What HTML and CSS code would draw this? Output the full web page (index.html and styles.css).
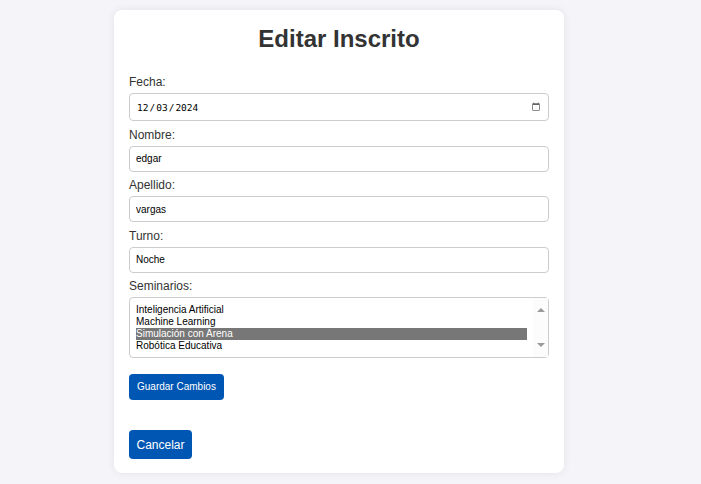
FILE: index.html
```html
<!DOCTYPE html>
<html lang="es">
<head>
<meta charset="utf-8">
<title>Editar Inscrito</title>
<link rel="stylesheet" href="styles.css">
</head>
<body>
<div class="card">
  <h2 class="title">Editar Inscrito</h2>
  <form class="form">
    <label class="label" for="fecha">Fecha:</label>
    <input class="field field-date" type="date" id="fecha" value="2024-12-03">
    <label class="label" for="nombre">Nombre:</label>
    <input class="field" type="text" id="nombre" value="edgar">
    <label class="label" for="apellido">Apellido:</label>
    <input class="field" type="text" id="apellido" value="vargas">
    <label class="label" for="turno">Turno:</label>
    <input class="field" type="text" id="turno" value="Noche">
    <label class="label">Seminarios:</label>
    <div class="listbox" role="listbox" aria-multiselectable="true">
      <div class="options">
        <div class="option" role="option">Inteligencia Artificial</div>
        <div class="option" role="option">Machine Learning</div>
        <div class="option selected" role="option" aria-selected="true">Simulación con Arena</div>
        <div class="option" role="option">Robótica Educativa</div>
      </div>
      <div class="scrollbar">
        <span class="arrow arrow-up"></span>
        <span class="arrow arrow-down"></span>
      </div>
    </div>
    <div class="actions">
      <button class="btn btn-save" type="button">Guardar Cambios</button>
    </div>
  </form>
  <div class="actions">
    <a class="btn btn-cancel" href="#">Cancelar</a>
  </div>
</div>
</body>
</html>
```
FILE: styles.css
```css
html, body {
  margin: 0;
  padding: 0;
}
body {
  background: #f4f4f9;
  font-family: "Liberation Sans", Arial, sans-serif;
  color: #333;
}
.card {
  box-sizing: border-box;
  width: 450px;
  margin: 10px 0 11px 114px;
  padding: 15px 15px 14px;
  background: #fff;
  border-radius: 8px;
  box-shadow: 0 0 8px rgba(0, 0, 0, 0.08);
}
.title {
  margin: 0 0 22px;
  font-size: 24px;
  line-height: 28px;
  font-weight: bold;
  text-align: center;
  color: #333;
}
.form {
  display: flex;
  flex-direction: column;
  margin: 0 0 30px;
}
.label {
  display: block;
  font-size: 12px;
  line-height: 15px;
  margin-bottom: 3px;
  color: #333;
}
.field {
  box-sizing: border-box;
  width: 100%;
  height: 26px;
  margin: 0 0 6.5px;
  padding: 0 6px;
  border: 1px solid #ccc;
  border-radius: 4px;
  font-family: "Liberation Sans", Arial, sans-serif;
  font-size: 10px;
  color: #000;
  background: #fff;
  outline: none;
}
.field-date {
  height: 28px;
  padding: 0 7px 0 6px;
  font-family: "DejaVu Sans Mono", "Liberation Mono", monospace;
  font-size: 9.5px;
}
.field-date::-webkit-calendar-picker-indicator {
  width: 10px;
  height: 10px;
  padding: 0;
  margin: 0;
  opacity: 0.6;
}
.listbox {
  box-sizing: border-box;
  display: flex;
  height: 61px;
  margin-bottom: 16px;
  padding-left: 6px;
  border: 1px solid #ccc;
  border-radius: 4px;
  background: #fff;
}
.options {
  flex: 1;
  padding: 6px 0 5px;
  margin-right: 6px;
}
.option {
  font-size: 10px;
  line-height: 12px;
  height: 12px;
  color: #000;
  white-space: nowrap;
}
.option.selected {
  background: #777;
  color: #fff;
}
.scrollbar {
  width: 15px;
  display: flex;
  flex-direction: column;
  align-items: center;
  justify-content: space-between;
  padding: 10px 0;
  box-sizing: border-box;
  background: #fcfcfc;
}
.arrow {
  width: 0;
  height: 0;
  border-left: 4px solid transparent;
  border-right: 4px solid transparent;
}
.arrow-up {
  border-bottom: 4px solid #999;
}
.arrow-down {
  border-top: 4px solid #999;
}
.actions {
  display: flex;
}
.btn {
  display: inline-block;
  border: none;
  border-radius: 4px;
  background: #0056b3;
  color: #fff;
  font-family: "Liberation Sans", Arial, sans-serif;
  text-decoration: none;
  cursor: pointer;
}
.btn-save {
  font-size: 10px;
  line-height: 12px;
  padding: 7px 8px;
}
.btn-cancel {
  font-size: 12px;
  line-height: 14px;
  padding: 7.5px 7.5px;
}
```
